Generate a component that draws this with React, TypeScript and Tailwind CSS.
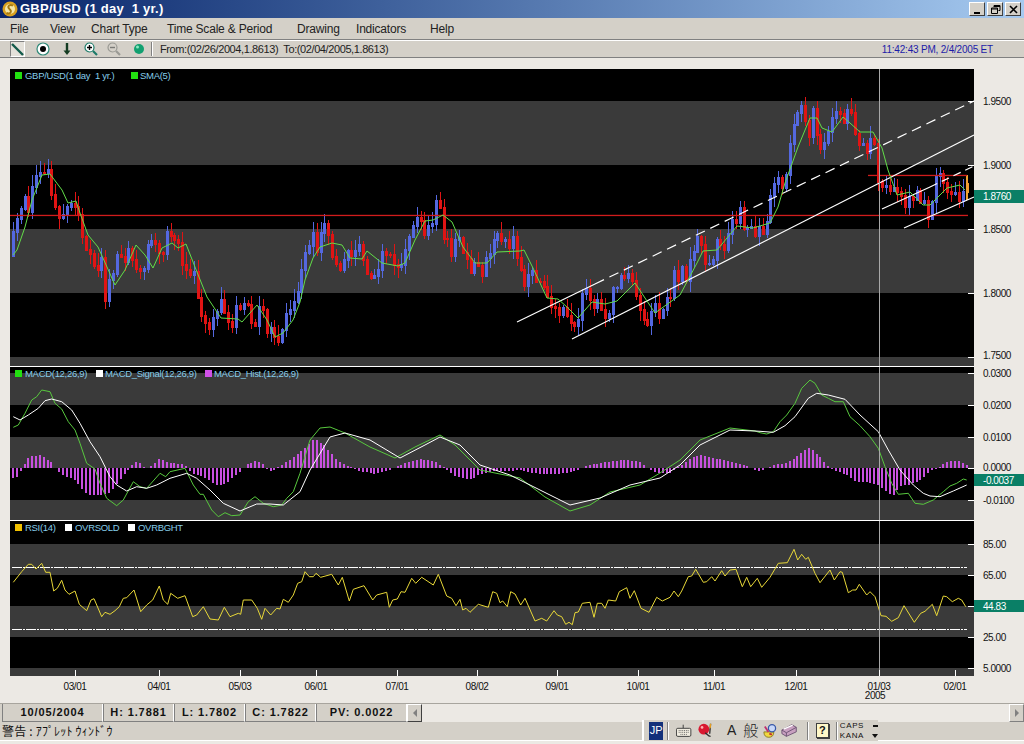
import { Fragment } from "react";

type Pt = [number, number];

// helper: points were read off 3x crops, so scale them back to page coords
const crop = (ox: number, oy: number, arr: number[][]): Pt[] =>
  arr.map(([x, y]) => [ox + x / 3, oy + y / 3] as Pt);

const line = (p: Pt[]) => p.map(([x, y]) => `${x.toFixed(1)},${y.toFixed(1)}`).join(" ");

const at = (p: Pt[], x: number) => {
  if (x <= p[0][0]) return p[0][1];
  for (let i = 1; i < p.length; i++) {
    if (x <= p[i][0]) {
      const t = (x - p[i - 1][0]) / (p[i][0] - p[i - 1][0]);
      return p[i - 1][1] + t * (p[i][1] - p[i - 1][1]);
    }
  }
  return p[p.length - 1][1];
};

const sma: Pt[] = [
  [13, 255], [17, 250], [25, 227], [32, 200], [42, 175], [50, 174], [62, 190], [68, 203], [76, 201], [80, 213],
  [88, 235], [98, 247], [107, 267], [115, 285], [125, 270], [136, 245], [145, 255], [153, 268], [162, 248], [172, 243],
  [178, 248], [186, 244], [195, 267], [207, 297], [221, 318], [238, 319], [242, 322], [257, 305], [267, 320], [275, 337],
  [283, 333], [293, 320], [300, 302], [305, 280], [313, 258], [320, 247], [332, 243], [342, 245], [350, 258], [362, 259],
  [367, 251], [382, 263], [398, 266], [405, 263], [415, 240], [425, 221], [433, 220], [443, 215], [452, 222], [463, 247],
  [475, 263], [487, 263], [497, 252], [520, 251], [524, 250], [533, 268], [547, 298], [558, 299], [567, 307], [578, 318],
  [592, 302], [605, 304], [617, 301], [635, 283], [655, 313], [680, 295], [697, 263], [703, 251], [717, 250], [737, 226],
  [753, 228], [770, 223], [778, 207], [785, 183], [798, 147], [810, 118], [817, 118], [822, 128], [832, 132], [843, 117],
  [850, 123], [860, 132], [873, 132], [882, 148], [888, 170], [897, 195], [910, 192], [923, 205], [930, 205], [947, 188],
  [960, 185], [965, 190],
];

const rnd = (n: number) => {
  const s = Math.sin(n * 127.1 + 11.7) * 43758.5453;
  return s - Math.floor(s);
};

const candles = (() => {
  const out: { x: number; open: number; close: number; hi: number; lo: number }[] = [];
  let prev = 255;
  for (let i = 0; i < 249; i++) {
    const x = Math.round(13 + i * 3.845);
    // slow swing plus daily noise, so candles come in runs of one colour
    const swing = 13 * Math.sin(i * 0.85 + rnd(Math.floor(i / 8)) * 6);
    const close = at(sma, x + 8) + swing + (rnd(i) - 0.5) * 18;
    const hi = Math.min(prev, close) - 1 - rnd(i + 500) * 11;
    const lo = Math.max(prev, close) + 1 + rnd(i + 900) * 11;
    out.push({ x, open: prev, close, hi, lo });
    prev = close;
  }
  return out;
})();

const macd: Pt[] = [
  ...crop(0, 360, [
    [40, 202], [55, 195], [75, 160], [95, 120], [110, 110], [125, 90], [150, 95], [165, 130], [185, 147], [205, 185],
    [225, 210], [240, 250], [260, 310], [285, 327], [300, 370], [320, 415], [350, 437], [370, 420], [400, 365], [420, 380],
    [440, 385], [480, 340], [497, 350], [510, 335], [555, 325], [580, 375], [600, 403], [610, 403], [635, 450], [655, 470],
    [675, 458], [695, 467], [720, 465], [745, 425], [765, 410], [790, 430], [820, 440], [845, 435], [860, 415], [880, 395],
    [900, 340],
  ]),
  [310, 440], [320, 428], [330, 427], [345, 433], [370, 447], [395, 458], [415, 447], [440, 435], [455, 445], [480, 470],
  [520, 478], [545, 497], [570, 511], [590, 505], [610, 492], [640, 485], [660, 473], [680, 460], [700, 440], [730, 428],
  [755, 431],
  ...crop(760, 360, [
    [0, 218], [20, 222], [40, 215], [60, 185], [80, 165], [105, 130], [125, 85], [150, 60], [165, 70], [185, 105],
    [205, 115], [225, 125], [250, 125], [270, 170], [300, 197], [330, 230], [355, 265], [375, 320], [395, 370], [415, 403],
    [445, 400], [465, 430], [490, 433], [520, 420], [550, 395], [570, 378], [590, 370], [610, 357], [620, 360],
  ]),
];

const signal: Pt[] = [
  ...crop(0, 360, [
    [40, 170], [60, 180], [85, 165], [115, 145], [135, 122], [155, 117], [185, 125], [215, 150], [240, 190], [270, 245],
    [300, 290], [330, 350], [350, 375], [380, 393], [410, 380], [440, 385], [470, 375], [510, 355], [560, 340], [590, 355],
    [630, 390], [670, 430], [720, 453], [770, 432], [810, 432], [850, 435], [900, 395],
  ]),
  [310, 470], [330, 437], [345, 433], [370, 440], [400, 458], [425, 445], [440, 437], [460, 445], [480, 465], [510, 475],
  [540, 490], [570, 505], [600, 498], [630, 485], [660, 478], [680, 465], [700, 445], [730, 430], [755, 431],
  ...crop(760, 360, [
    [0, 214], [40, 217], [75, 197], [105, 170], [145, 115], [170, 100], [205, 105], [255, 118], [300, 165], [355, 215],
    [385, 270], [420, 330], [460, 375], [490, 400], [510, 408], [540, 410], [580, 393], [620, 375],
  ]),
];

// histogram height above (+) or below (-) the zero line at y=468
const histShape: Pt[] = [
  [13, -10], [16, -10], [20, -5], [24, 2], [28, 10], [32, 12], [40, 13], [46, 10], [52, 5], [57, -3],
  [65, -8], [75, -12], [85, -25], [90, -27], [100, -27], [110, -25], [120, -12], [128, -2], [132, 3], [137, 7],
  [143, 3], [146, -2], [155, 5], [160, 10], [170, 5], [182, 4], [187, 1], [192, -5], [205, -10], [217, -17],
  [225, -16], [235, -8], [242, -2], [248, 4], [255, 7], [262, 5], [268, -2], [272, -3], [280, 2], [290, 8],
  [295, 12], [305, 20], [315, 30], [325, 22], [335, 10], [345, 3], [360, -3], [375, -6], [390, -2], [405, 5],
  [420, 9], [435, 7], [445, 0], [455, -8], [470, -12], [480, -6], [495, -3], [510, -3], [520, -2], [530, -5],
  [545, -6], [560, -6], [575, -3], [585, 2], [600, 5], [625, 8], [640, 6], [650, -2], [660, -5], [670, -5],
  [680, 2], [690, 9], [700, 13], [715, 10], [730, 6], [745, 3], [755, -2], [760, -3], [775, 3], [785, 5],
  [793, 8], [803, 17], [810, 20], [815, 17], [822, 8], [827, 3], [832, -1], [840, -4], [847, -7], [857, -14],
  [867, -14], [878, -17], [888, -25], [893, -28], [900, -18], [908, -17], [917, -14], [923, -10], [930, -3], [937, -1],
  [943, 4], [950, 7], [960, 7], [967, 3],
];

const hist = Array.from({ length: 249 }, (_, i) => {
  const x = Math.round(13 + i * 3.845);
  return { x, v: at(histShape, x) };
});

const rsi: Pt[] = [
  ...crop(0, 520, [
    [40, 187], [65, 155], [85, 133], [95, 133], [108, 147], [125, 130], [137, 157], [150, 157], [161, 213], [172, 205],
    [185, 181], [195, 210], [207, 223], [225, 213], [238, 253], [260, 272], [273, 240], [282, 236], [305, 290], [315, 277],
    [330, 283], [345, 272], [358, 260], [370, 235], [380, 233], [402, 210], [422, 275], [440, 255], [458, 240], [478, 198],
    [490, 240], [503, 253], [512, 220], [533, 235], [555, 227], [578, 290], [590, 285], [610, 260], [630, 297], [655, 300],
    [673, 262], [690, 290], [715, 280], [722, 283], [730, 240], [755, 240], [772, 265], [785, 298], [795, 265], [812, 285],
    [830, 265], [840, 267], [850, 238], [865, 247], [880, 225], [893, 190], [905, 185], [915, 155], [928, 170], [940, 170],
    [948, 160], [962, 172], [995, 163], [1015, 195], [1027, 172], [1048, 243], [1060, 208], [1092, 197], [1118, 240], [1130, 225],
    [1160, 217], [1168, 262], [1178, 240], [1192, 237], [1203, 215], [1215, 217], [1235, 175], [1247, 190], [1265, 172], [1300, 195],
    [1315, 163], [1340, 228], [1355, 235], [1368, 257], [1380, 238], [1388, 270], [1398, 265], [1410, 277], [1435, 253], [1465, 262],
    [1478, 215], [1490, 220], [1500, 248],
  ]),
  ...crop(500, 520, [
    [8, 243], [22, 260], [32, 215], [45, 222], [62, 255], [75, 235], [105, 303], [125, 295], [140, 303], [162, 272],
    [172, 285], [185, 290], [197, 313], [207, 307], [217, 314], [225, 278], [235, 276], [247, 250], [270, 247], [282, 292],
    [292, 250], [305, 250], [315, 265], [325, 240], [347, 243], [358, 215], [380, 203], [390, 235], [403, 212], [423, 265],
    [447, 277], [470, 232], [487, 243], [510, 232], [522, 213], [535, 230], [545, 213], [565, 170], [575, 168], [587, 148],
    [610, 187], [620, 185], [635, 170], [645, 183], [665, 152], [675, 168], [690, 150], [708, 148], [727, 200], [740, 172],
    [752, 200], [772, 175], [785, 202], [810, 172], [835, 130], [862, 128], [882, 88], [893, 120], [905, 103], [917, 118],
    [925, 112], [945, 160], [960, 188], [990, 150], [1003, 180], [1020, 155], [1027, 157], [1045, 218], [1058, 210], [1068, 210],
    [1078, 193], [1100, 225], [1110, 215], [1125, 230], [1143, 287], [1158, 289], [1175, 304], [1195, 293], [1212, 257], [1243, 307],
    [1262, 280], [1275, 274], [1297, 253], [1310, 287], [1330, 228], [1340, 230], [1357, 245], [1375, 235], [1385, 240], [1397, 260],
  ]),
];

const menuItems = [
  { label: "File", w: "w-[40px]" },
  { label: "View", w: "w-[41px]" },
  { label: "Chart Type", w: "w-[76px]" },
  { label: "Time Scale & Period", w: "w-[130px]" },
  { label: "Drawing", w: "w-[59px]" },
  { label: "Indicators", w: "w-[74px]" },
  { label: "Help", w: "w-[40px]" },
];

const xTicks = [
  { x: 75, label: "03/01" },
  { x: 159, label: "04/01" },
  { x: 240, label: "05/03" },
  { x: 316, label: "06/01" },
  { x: 397, label: "07/01" },
  { x: 477, label: "08/02" },
  { x: 557, label: "09/01" },
  { x: 638, label: "10/01" },
  { x: 714, label: "11/01" },
  { x: 796, label: "12/01" },
  { x: 879, label: "01/03" },
  { x: 955, label: "02/01" },
];

const statusCells = [
  { label: "10/05/2004", w: "w-[101px]" },
  { label: "H: 1.7881", w: "w-[71px]" },
  { label: "L: 1.7802", w: "w-[71px]" },
  { label: "C: 1.7822", w: "w-[71px]" },
  { label: "PV: 0.0022", w: "w-[91px]" },
];

function Bands({ x0 = 10, bands }: { x0?: number; bands: number[][] }) {
  return (
    <>
      {bands.map(([a, b]) => (
        <rect key={a} x={x0} y={a} width={964} height={b - a} fill="#3a3a3a" />
      ))}
    </>
  );
}

function Ticks({ ys }: { ys: number[] }) {
  return (
    <>
      {ys.map((y) => (
        <rect key={y} x={968} y={y} width={6} height={1} fill="#ffffff" />
      ))}
    </>
  );
}

function AxisLabels({ items }: { items: { y: number; t: string; x?: number }[] }) {
  return (
    <>
      {items.map((it) => (
        <text key={it.t} x={it.x ?? 983} y={it.y + 4} fill="#111111" className="text-[10px] tracking-[-0.45px]">
          {it.t}
        </text>
      ))}
    </>
  );
}

function Badge({ y, h, t, x = 983 }: { y: number; h: number; t: string; x?: number }) {
  return (
    <>
      <rect x={974} y={y} width={50} height={h} fill="#0a7f66" />
      <text x={x} y={y + h / 2 + 3.5} fill="#ffffff" className="text-[10px] tracking-[-0.45px]">
        {t}
      </text>
    </>
  );
}

function Legend({ items, y }: { items: { x: number; color: string; label: string; tx: number }[]; y: number }) {
  return (
    <>
      {items.map((it) => (
        <Fragment key={it.label}>
          <rect x={it.x} y={y - 3} width={7} height={7} fill={it.color} />
          <text x={it.tx} y={y + 3.500} fill="#86cdea" className="whitespace-pre text-[9.5px] tracking-[-0.3px]">
            {it.label}
          </text>
        </Fragment>
      ))}
    </>
  );
}

function PricePanel() {
  return (
    <svg width={1014} height={298} viewBox="10 69 1014 298" className="block">
      <rect x={10} y={69} width={964} height={298} fill="#000000" />
      <Bands bands={[[101, 165], [229, 293], [357, 366]]} />
      <g shapeRendering="crispEdges">
        {candles.map((c, i) => {
          const last = i === candles.length - 1;
          const color = last ? "#f0a030" : c.close > c.open ? "#e01414" : "#5468e0";
          return (
            <Fragment key={c.x}>
              <rect x={c.x} y={c.hi} width={1} height={c.lo - c.hi} fill={color} />
              <rect x={c.x - 1} y={Math.min(c.open, c.close)} width={3} height={Math.abs(c.close - c.open) + 2} fill={color} />
            </Fragment>
          );
        })}
        <rect x={966} y={175} width={1} height={26} fill="#f0a030" />
      </g>
      <rect x={10} y={214.8} width={958} height={1.3} fill="#d01c1c" />
      <rect x={868} y={174.8} width={99} height={1.3} fill="#d01c1c" />
      <g stroke="#ffffff" strokeWidth={1.2}>
        <line x1={572} y1={339} x2={974} y2={135} />
        <line x1={517} y1={322} x2={595} y2={284} />
        <line x1={595} y1={284} x2={974} y2={101} strokeDasharray="10 6" />
        <line x1={882} y1={209} x2={930} y2={187} />
        <line x1={930} y1={187} x2={974} y2={166} strokeDasharray="8 5" />
        <line x1={904} y1={228} x2={974} y2={197} />
      </g>
      <polyline points={line(sma)} fill="none" stroke="#62dd48" strokeWidth={1} />
      <rect x={879} y={69} width={1} height={297} fill="#a8a8a8" />
      <rect x={10} y={366} width={964} height={1} fill="#ffffff" />
      <Ticks ys={[101, 165, 229, 293, 357]} />
      <Legend
        y={75}
        items={[
          { x: 15, color: "#22e010", label: "GBP/USD(1 day  1 yr.)", tx: 25 },
          { x: 131, color: "#22e010", label: "SMA(5)", tx: 140 },
        ]}
      />
      <AxisLabels
        items={[
          { y: 101, t: "1.9500" },
          { y: 165, t: "1.9000" },
          { y: 229, t: "1.8500" },
          { y: 293, t: "1.8000" },
          { y: 355, t: "1.7500" },
        ]}
      />
      <Badge y={190} h={13} t="1.8760" />
    </svg>
  );
}

function MacdPanel() {
  return (
    <svg width={1014} height={154} viewBox="10 367 1014 154" className="block">
      <rect x={10} y={367} width={964} height={154} fill="#000000" />
      <Bands bands={[[373, 405], [437, 468], [500, 520]]} />
      <g shapeRendering="crispEdges">
        {hist.map((h) => (
          <rect key={h.x} x={h.x - 1} y={h.v > 0 ? 468 - h.v : 468} width={2} height={Math.abs(h.v)} fill="#c850e0" />
        ))}
      </g>
      <polyline points={line(macd)} fill="none" stroke="#58c83e" strokeWidth={1} />
      <polyline points={line(signal)} fill="none" stroke="#ffffff" strokeWidth={1} />
      <rect x={879} y={367} width={1} height={153} fill="#a8a8a8" />
      <rect x={10} y={520} width={964} height={1} fill="#ffffff" />
      <Ticks ys={[373, 405, 437, 468, 500]} />
      <Legend
        y={373}
        items={[
          { x: 15, color: "#22e010", label: "MACD(12,26,9)", tx: 25 },
          { x: 96, color: "#ffffff", label: "MACD_Signal(12,26,9)", tx: 105 },
          { x: 205, color: "#d050e8", label: "MACD_Hist.(12,26,9)", tx: 214 },
        ]}
      />
      <AxisLabels
        items={[
          { y: 373, t: "0.0300" },
          { y: 405, t: "0.0200" },
          { y: 437, t: "0.0100" },
          { y: 467, t: "0.0000" },
          { y: 500, t: "-0.0100" },
        ]}
      />
      <Badge y={474} h={12} t="-0.0037" />
    </svg>
  );
}

function RsiPanel() {
  return (
    <svg width={1014} height={155} viewBox="10 521 1014 155" className="block">
      <rect x={10} y={521} width={964} height={155} fill="#000000" />
      <Bands bands={[[544, 575], [606, 637], [668, 676]]} />
      <g stroke="#ffffff" strokeWidth={1} strokeDasharray="10 1 2 1" shapeRendering="crispEdges">
        <line x1={12} y1={567.5} x2={967} y2={567.5} />
        <line x1={12} y1={629.5} x2={967} y2={629.5} />
      </g>
      <polyline points={line(rsi)} fill="none" stroke="#e8d838" strokeWidth={1} />
      <rect x={879} y={521} width={1} height={155} fill="#a8a8a8" />
      <Ticks ys={[544, 575, 606, 637, 668]} />
      {xTicks.map((t) => (
        <rect key={t.x} x={t.x} y={670} width={1} height={6} fill="#ffffff" />
      ))}
      <Legend
        y={527}
        items={[
          { x: 15, color: "#f0c000", label: "RSI(14)", tx: 25 },
          { x: 65, color: "#ffffff", label: "OVRSOLD", tx: 75 },
          { x: 128, color: "#ffffff", label: "OVRBGHT", tx: 138 },
        ]}
      />
      <AxisLabels
        items={[
          { y: 544, t: "85.00" },
          { y: 575, t: "65.00" },
          { y: 637, t: "25.00" },
          { y: 668, t: "5.0000" },
        ]}
      />
      <Badge y={600} h={12} t="44.83" />
    </svg>
  );
}

function XAxis() {
  return (
    <svg width={1014} height={26} viewBox="10 676 1014 26" className="block">
      {xTicks.map((t) => (
        <text key={t.x} x={t.x} y={690} textAnchor="middle" fill="#111111" className="text-[10px] tracking-[-0.45px]">
          {t.label}
        </text>
      ))}
      <text x={875} y={699} textAnchor="middle" fill="#111111" className="text-[10px] tracking-[-0.45px]">
        2005
      </text>
    </svg>
  );
}

function TitleBar() {
  return (
    <div className="flex h-[18px] items-center bg-gradient-to-r from-[#0a246a] to-[#a6caf0] pl-[2px] pr-[3px]">
      <svg width={16} height={16} viewBox="0 0 16 16">
        <circle cx={8} cy={8} r={7.5} fill="#d8a020" />
        <circle cx={8} cy={8} r={5} fill="#f4e6a8" />
        <path d="M11 4.500C8 3 5 5 7 7.500s3 2.500 1 4.500c-1 .6-2.500.5-3.500 0" fill="none" stroke="#a87a10" strokeWidth={2} />
      </svg>
      <span className="ml-[2px] whitespace-pre text-[13px] font-bold tracking-[0.25px] text-white">
        GBP/USD (1 day  1 yr.)
      </span>
      <div className="ml-auto flex">
        <WinButton>
          <rect x={3} y={9} width={6} height={2} fill="#000000" />
        </WinButton>
        <WinButton className="ml-[2px]">
          <path d="M5 2.500h6v5H9.500M5 2.500V4M5 3.500h6M2.500 5H8.500V10.500H2.500ZM2.500 6H8.500" fill="none" stroke="#000000" />
        </WinButton>
        <WinButton className="ml-[2px]">
          <path d="M3 3l7 7M10 3l-7 7" stroke="#000000" strokeWidth={1.6} />
        </WinButton>
      </div>
    </div>
  );
}

function WinButton({ children, className = "" }: { children: React.ReactNode; className?: string }) {
  return (
    <div className={`flex h-[14px] w-[16px] items-center justify-center border border-b-[#404040] border-l-white border-r-[#404040] border-t-white bg-[#d4d0c8] ${className}`}>
      <svg width={13} height={12} viewBox="0 0 13 12">
        {children}
      </svg>
    </div>
  );
}

function MenuBar() {
  return (
    <div className="flex h-[22px] items-center border-b border-b-[#808080] bg-[#d4d0c8] pl-[10px] text-[12px] tracking-[-0.2px] text-[#222222]">
      {menuItems.map((m) => (
        <span key={m.label} className={`${m.w} whitespace-nowrap`}>
          {m.label}
        </span>
      ))}
    </div>
  );
}

function ToolBar() {
  return (
    <div className="flex h-[18px] items-center border-b border-b-[#808080] border-t border-t-white bg-[#d4d0c8] pl-[10px] text-[11px] text-[#222222]">
      <div className="flex h-[16px] w-[15px] items-center justify-center border border-b-white border-l-[#808080] border-r-white border-t-[#808080] bg-[#e4e1da]">
        <svg width={13} height={13} viewBox="0 0 13 13">
          <path d="M1 1L12 12" stroke="#125a4a" strokeWidth={2.400} />
        </svg>
      </div>
      <svg width={14} height={14} viewBox="0 0 14 14" className="ml-[11px]">
        <circle cx={7} cy={7} r={6} fill="#ffffff" stroke="#2f8a78" strokeWidth={1.200} />
        <circle cx={7} cy={7} r={3} fill="#000000" />
      </svg>
      <svg width={12} height={14} viewBox="0 0 12 14" className="ml-[11px]">
        <path d="M6 1V9" stroke="#143c22" strokeWidth={2.400} />
        <path d="M2.500 8.500H9.500L6 13Z" fill="#143c22" />
      </svg>
      <svg width={14} height={14} viewBox="0 0 14 14" className="ml-[11px]">
        <circle cx={5.500} cy={5.500} r={4.500} fill="#ffffff" stroke="#1a7a68" strokeWidth={1.200} />
        <path d="M3 5.500H8M5.500 3V8" stroke="#000000" strokeWidth={1.400} />
        <path d="M9 9L13 13" stroke="#1a7a68" strokeWidth={2.200} />
      </svg>
      <svg width={14} height={14} viewBox="0 0 14 14" className="ml-[9px]">
        <circle cx={5.500} cy={5.500} r={4.500} fill="#d4d0c8" stroke="#9a9a94" strokeWidth={1.200} />
        <path d="M3 5.500H8" stroke="#7a7a76" strokeWidth={1.400} />
        <path d="M9 9L13 13" stroke="#9a9a94" strokeWidth={2.200} />
      </svg>
      <svg width={12} height={12} viewBox="0 0 12 12" className="ml-[12px]">
        <circle cx={6} cy={6} r={5} fill="#12a070" />
        <circle cx={4.500} cy={4} r={1.500} fill="#8ce8c0" />
      </svg>
      <div className="ml-[6px] h-[14px] w-[2px] border-l border-l-[#808080] border-r border-r-white" />
      <span className="ml-[7px] whitespace-pre tracking-[-0.4px]">From:(02/26/2004,1.8613)  To:(02/04/2005,1.8613)</span>
      <span className="ml-auto mr-[31px] text-[10px] tracking-[-0.2px] text-[#1c1ca8]">11:42:43 PM, 2/4/2005 ET</span>
    </div>
  );
}

function StatusRow() {
  return (
    <div className="flex h-[19px] border-t border-t-[#a8a59e] bg-[#d4d0c8] pl-[2px]">
      {statusCells.map((c) => (
        <div
          key={c.label}
          className={`${c.w} flex items-center justify-center border-b border-b-[#808080] border-l border-l-[#808080] border-r border-r-white text-[11px] font-bold tracking-[0.9px] text-[#111111]`}
        >
          {c.label}
        </div>
      ))}
      <div className="flex flex-1">
        <div className="flex w-[15px] items-center justify-center border border-b-[#404040] border-l-white border-r-[#404040] border-t-white bg-[#d4d0c8]">
          <span className="h-0 w-0 border-b-[4px] border-r-[4px] border-t-[4px] border-b-transparent border-r-[#808080] border-t-transparent" />
        </div>
        <div className="flex-1 bg-[#ece9e4]" />
        <div className="flex w-[15px] items-center justify-center border border-b-[#808080] border-l-white border-r-[#808080] border-t-white bg-[#d4d0c8]">
          <span className="h-0 w-0 border-b-[4px] border-l-[4px] border-t-[4px] border-b-transparent border-l-[#808080] border-t-transparent" />
        </div>
      </div>
    </div>
  );
}

function ImeBar() {
  return (
    <div className="absolute left-[642px] top-[720px] flex h-[21px] w-[236px] items-center border-l-2 border-l-white bg-[#d4d0c8]">
      <div className="ml-[5px] flex h-[18px] w-[16px] items-center justify-center bg-[#12307a] text-[11px] text-white">JP</div>
      <div className="ml-[4px] h-[18px] w-[2px] border-l border-l-[#808080] border-r border-r-white" />
      <svg width={17} height={14} viewBox="0 0 17 14" className="ml-[7px]">
        <path d="M8 0V4" stroke="#333333" />
        <rect x={0.500} y={4} width={16} height={9} rx={1.500} fill="#f0ece0" stroke="#333333" />
        <path d="M3 6.500H14M3 8.500H14M5 10.800H12" stroke="#555555" strokeDasharray="1 1" />
      </svg>
      <svg width={17} height={18} viewBox="0 0 17 18" className="ml-[6px]">
        <circle cx={6.500} cy={7} r={6} fill="#d81830" />
        <circle cx={4.500} cy={5} r={1.500} fill="#ffb0b0" />
        <path d="M8 11c2 1 3 4 6 4M14 1L13 12" stroke="#303030" strokeWidth={1.500} fill="none" />
        <path d="M14 1L13.500 6" stroke="#e8a020" strokeWidth={1.500} />
      </svg>
      <span className="ml-[14px] text-[14px] font-light text-[#222222]">A</span>
      <span className="ml-[7px] font-['Noto_Sans_CJK_JP',sans-serif] text-[15px] font-light text-[#222222]">般</span>
      <svg width={15} height={16} viewBox="0 0 15 16" className="ml-[5px]">
        <path d="M1 9h11c0 4-2 6-5.500 6S1 13 1 9Z" fill="#f0d840" stroke="#8a7a20" />
        <circle cx={10} cy={5} r={4} fill="#c8d8f8" stroke="#3858a8" strokeWidth={1.400} />
        <path d="M2 3L6 9" stroke="#c03070" strokeWidth={2} />
        <path d="M7 11L10 12" stroke="#c03030" strokeWidth={2} />
      </svg>
      <svg width={18} height={15} viewBox="0 0 18 15" className="ml-[4px]">
        <path d="M1 7L12 1 17 4V9L6 14 1 11Z" fill="#c8a0c0" stroke="#6a5070" />
        <path d="M1 7L6 10 17 4M6 10V14" fill="none" stroke="#6a5070" />
        <path d="M3 6L13 1.500" stroke="#ffffff" strokeWidth={1.500} />
      </svg>
      <div className="ml-[10px] h-[18px] w-[2px] border-l border-l-[#808080] border-r border-r-white" />
      <div className="ml-[7px] flex h-[15px] w-[14px] items-center justify-center border border-[#404040] bg-[#fff8c8] text-[11px] font-bold text-[#111111] shadow-[1px_1px_0_#404040]">
        ?
      </div>
      <div className="ml-[7px] h-[18px] w-[2px] border-l border-l-[#808080] border-r border-r-white" />
      <div className="ml-[2px] flex flex-col text-[8px] leading-[10px] tracking-[0.6px] text-[#111111]">
        <span className="flex items-center">
          CAPS
          <span className="ml-[9px] h-[2px] w-[5px] bg-[#111111]" />
        </span>
        <span className="flex items-center">
          KANA
          <span className="ml-[8px] h-0 w-0 border-l-[3px] border-r-[3px] border-t-[4px] border-l-transparent border-r-transparent border-t-[#111111]" />
        </span>
      </div>
    </div>
  );
}

export default function App() {
  return (
    <div className="relative flex h-[744px] w-[1024px] flex-col overflow-hidden bg-[#ece9e4] font-['Liberation_Sans',sans-serif]">
      <TitleBar />
      <MenuBar />
      <ToolBar />
      <div className="flex-1 pl-[10px] pt-[11px]">
        <PricePanel />
        <MacdPanel />
        <RsiPanel />
        <XAxis />
      </div>
      <StatusRow />
      <div className="flex h-[18px] items-center bg-[#d4d0c8] pl-[2px] font-['Noto_Sans_CJK_JP',sans-serif] text-[12px] tracking-[0.2px] text-[#111111]">
        警告 : ｱﾌﾟﾚｯﾄ ｳｨﾝﾄﾞｳ
      </div>
      <div className="h-[4px] border-t border-t-white bg-[#ece9e4]" />
      <ImeBar />
    </div>
  );
}
